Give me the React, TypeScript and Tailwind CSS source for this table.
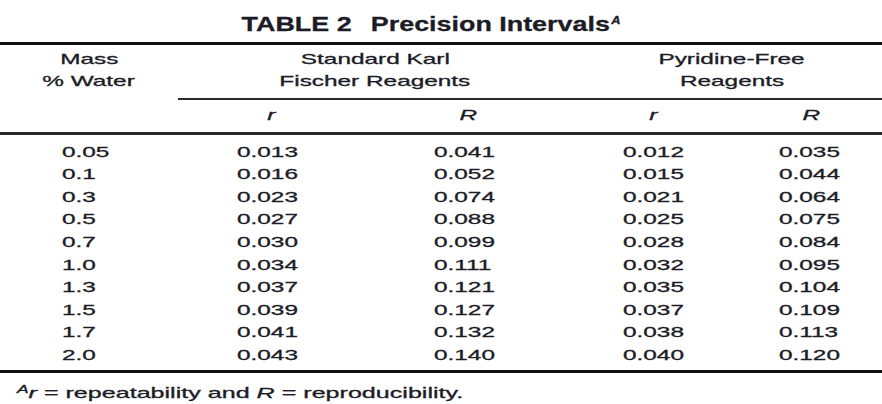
const rows = [
  ["0.05", "0.013", "0.041", "0.012", "0.035"],
  ["0.1", "0.016", "0.052", "0.015", "0.044"],
  ["0.3", "0.023", "0.074", "0.021", "0.064"],
  ["0.5", "0.027", "0.088", "0.025", "0.075"],
  ["0.7", "0.030", "0.099", "0.028", "0.084"],
  ["1.0", "0.034", "0.111", "0.032", "0.095"],
  ["1.3", "0.037", "0.121", "0.035", "0.104"],
  ["1.5", "0.039", "0.127", "0.037", "0.109"],
  ["1.7", "0.041", "0.132", "0.038", "0.113"],
  ["2.0", "0.043", "0.140", "0.040", "0.120"],
];

// the scan is stretched sideways, so every text run gets a horizontal scale
const wideCenter = "inline-block origin-center scale-x-[1.68] whitespace-nowrap";
const wideLeft = "inline-block origin-left scale-x-[1.68] whitespace-nowrap";

function HeadCell({ className, lines }: { className: string; lines: string[] }) {
  return (
    <div className={className}>
      {lines.map((l) => (
        <div key={l} className="text-center">
          <span className={wideCenter}>{l}</span>
        </div>
      ))}
    </div>
  );
}

function SubCell({ className, label }: { className: string; label: string }) {
  return (
    <div className={className}>
      <span className={`${wideCenter} italic`}>{label}</span>
    </div>
  );
}

export default function App() {
  return (
    <div className="w-[882px] h-[404px] overflow-hidden bg-white text-[#1c1c26] font-['Liberation_Sans',Arial,sans-serif] text-[14.5px] [-webkit-text-stroke:0.3px_#1c1c26]">
      {/* TITLE */}
      <div className="h-[42px] pt-[11px] flex justify-center pr-[20px]">
        <h1 className="inline-block origin-center scale-x-[1.28] whitespace-nowrap text-[21px] leading-[25px] font-bold">
          TABLE 2<span className="ml-[15px]">Precision Intervals</span>
          <span className="relative -top-[7px] ml-[1px] text-[10px] italic">A</span>
        </h1>
      </div>
      <div className="h-[3px] bg-[#111]" />

      {/* HEADER */}
      <div className="flex h-[87px] leading-[21.5px]">
        <HeadCell className="w-[178px] pt-[4px]" lines={["Mass", "% Water"]} />
        <div className="flex-1 flex flex-col">
          <div className="flex h-[53px] pt-[4px]">
            <HeadCell className="w-[394px]" lines={["Standard Karl", "Fischer Reagents"]} />
            <HeadCell className="flex-1 pl-[10px]" lines={["Pyridine-Free", "Reagents"]} />
          </div>
          <div className="h-[2px] bg-[#2a2a2a]" />
          <div className="flex flex-1 items-center">
            <SubCell className="w-[186px] text-center" label="r" />
            <SubCell className="w-[208px] text-center" label="R" />
            <SubCell className="w-[162px] text-center" label="r" />
            <SubCell className="flex-1 pl-[6px] text-center" label="R" />
          </div>
        </div>
      </div>
      <div className="h-[3px] bg-[#2a2a2a]" />

      {/* BODY */}
      <div className="h-[235px] pt-[5.7px]">
        {rows.map((r) => (
          <div key={r[0]} className="flex h-[22.6px] leading-[22.6px] pl-[62px]">
            <div className="w-[175px]"><span className={wideLeft}>{r[0]}</span></div>
            <div className="w-[197px]"><span className={wideLeft}>{r[1]}</span></div>
            <div className="w-[189px]"><span className={wideLeft}>{r[2]}</span></div>
            <div className="w-[156px]"><span className={wideLeft}>{r[3]}</span></div>
            <div className="flex-1"><span className={wideLeft}>{r[4]}</span></div>
          </div>
        ))}
      </div>
      <div className="h-[3px] bg-[#111]" />

      {/* FOOTNOTE */}
      <div className="pt-[9px] pl-[17px] leading-[22px]">
        <span className="inline-block origin-left scale-x-[1.73] whitespace-nowrap">
          <span className="relative -top-[5px] text-[10px] italic">A</span>
          <span className="italic">r</span> = repeatability and <span className="italic">R</span> = reproducibility.
        </span>
      </div>
    </div>
  );
}
